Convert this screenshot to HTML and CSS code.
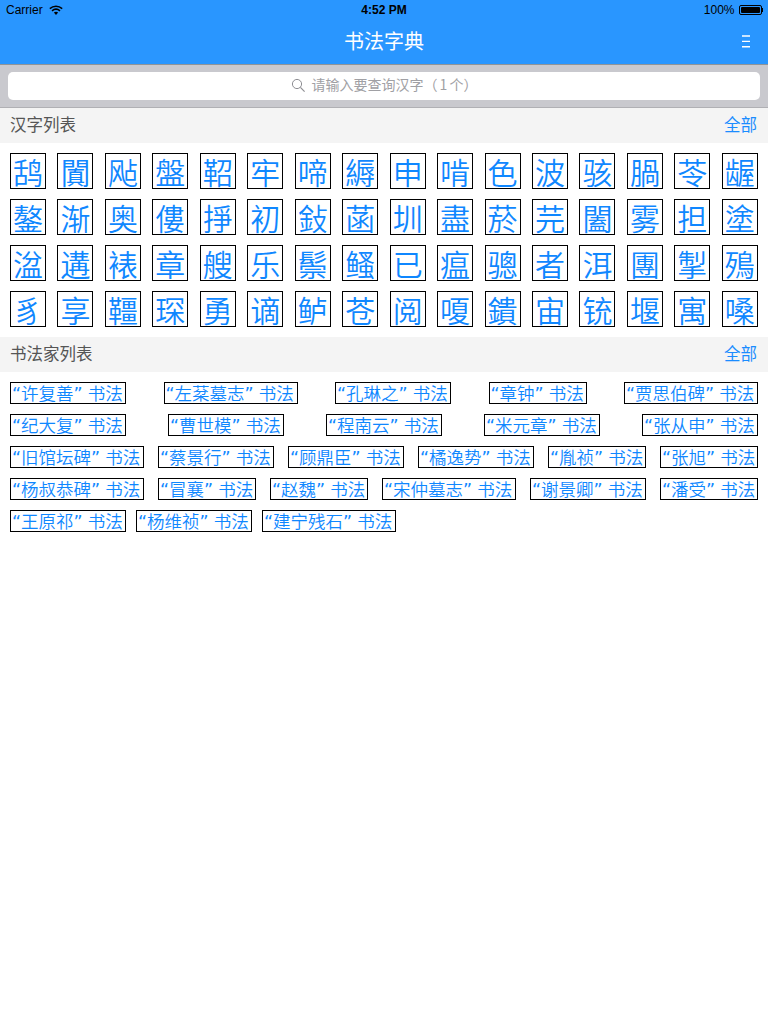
FILE: index.html
```html
<!DOCTYPE html>
<html lang="zh-CN">
<head>
<meta charset="utf-8">
<title>书法字典</title>
<link rel="stylesheet" href="styles.css">
</head>
<body>
<header class="nav">
  <div class="status">
    <div class="status-left"><span>Carrier</span>
      <svg class="wifi" width="14" height="10" viewBox="0 0 14 10"><path d="M.8 3.6C4.4.4 9.6.4 13.2 3.6" fill="none" stroke="#000" stroke-width="1.5"/><path d="M3 5.8c2.4-2 5.6-2 8 0" fill="none" stroke="#000" stroke-width="1.5"/><path d="M7 10 4.9 7.6c1.2-1 3-1 4.2 0z" fill="#000"/></svg>
    </div>
    <div class="status-time">4:52 PM</div>
    <div class="status-right"><span>100%</span>
      <span class="battery"><span class="battery-fill"></span></span><span class="battery-tip"></span>
    </div>
  </div>
  <div class="nav-bar">
    <h1 class="nav-title">书法字典</h1>
    <svg class="menu" width="8" height="13" viewBox="0 0 8 13"><path d="M0 1H8M0 6.4H8M0 11.8H8" stroke="#fff" stroke-width="1.4" fill="none"/></svg>
  </div>
</header>
<div class="search-wrap">
  <div class="search">
    <svg width="15" height="15" viewBox="0 0 15 15"><circle cx="6" cy="6" r="4.6" fill="none" stroke="#8e8e93" stroke-width="1"/><path d="M9.4 9.4 13.6 13.6" stroke="#8e8e93" stroke-width="1.2"/></svg>
    <span>请输入要查询汉字（<i class="count">1</i>个）</span>
  </div>
</div>
<section>
  <div class="sec-head"><span>汉字列表</span><a>全部</a></div>
  <div class="chars">
    <div class="char-row"><b>鸹</b><b>闐</b><b>飐</b><b>盤</b><b>鞀</b><b>牢</b><b>啼</b><b>縟</b><b>申</b><b>啃</b><b>色</b><b>波</b><b>骇</b><b>腡</b><b>苓</b><b>龌</b></div>
    <div class="char-row"><b>鏊</b><b>渐</b><b>奥</b><b>僂</b><b>掙</b><b>初</b><b>鈙</b><b>菡</b><b>圳</b><b>盡</b><b>菸</b><b>芫</b><b>闔</b><b>雾</b><b>担</b><b>塗</b></div>
    <div class="char-row"><b>湓</b><b>遘</b><b>裱</b><b>章</b><b>艘</b><b>乐</b><b>鬃</b><b>鳋</b><b>已</b><b>瘟</b><b>骢</b><b>者</b><b>洱</b><b>團</b><b>掣</b><b>殦</b></div>
    <div class="char-row"><b>豸</b><b>享</b><b>韁</b><b>琛</b><b>勇</b><b>谪</b><b>鲈</b><b>苍</b><b>阅</b><b>嗄</b><b>鐀</b><b>宙</b><b>铳</b><b>堰</b><b>寓</b><b>嗓</b></div>
  </div>
</section>
<section>
  <div class="sec-head"><span>书法家列表</span><a>全部</a></div>
  <div class="tags">
    <div class="tag-row"><b class="w3"><q>许复善</q>书法</b><b class="w4"><q>左棻墓志</q>书法</b><b class="w3"><q>孔琳之</q>书法</b><b class="w2"><q>章钟</q>书法</b><b class="w4"><q>贾思伯碑</q>书法</b></div>
    <div class="tag-row"><b class="w3"><q>纪大复</q>书法</b><b class="w3"><q>曹世模</q>书法</b><b class="w3"><q>程南云</q>书法</b><b class="w3"><q>米元章</q>书法</b><b class="w3"><q>张从申</q>书法</b></div>
    <div class="tag-row"><b class="w4"><q>旧馆坛碑</q>书法</b><b class="w3"><q>蔡景行</q>书法</b><b class="w3"><q>顾鼎臣</q>书法</b><b class="w3"><q>橘逸势</q>书法</b><b class="w2"><q>胤祯</q>书法</b><b class="w2"><q>张旭</q>书法</b></div>
    <div class="tag-row"><b class="w4"><q>杨叔恭碑</q>书法</b><b class="w2"><q>冒襄</q>书法</b><b class="w2"><q>赵魏</q>书法</b><b class="w4"><q>宋仲墓志</q>书法</b><b class="w3"><q>谢景卿</q>书法</b><b class="w2"><q>潘受</q>书法</b></div>
    <div class="tag-row last"><b class="w3"><q>王原祁</q>书法</b><b class="w3"><q>杨维祯</q>书法</b><b class="w4"><q>建宁残石</q>书法</b></div>
  </div>
</section>
</body>
</html>
```
FILE: styles.css
```css
* { box-sizing: border-box; }
html, body { margin: 0; padding: 0; background: #fff; }
body { font-family: "Noto Sans CJK SC", sans-serif; width: 768px; height: 1024px; overflow: hidden; }

.nav { height: 65px; background: #2996ff; border-bottom: 1px solid #8f9498; display: flex; flex-direction: column; }
.status { height: 20px; display: flex; justify-content: space-between; align-items: center; padding: 0 5px 0 6px; font: 12px/20px "Liberation Sans", sans-serif; color: #000; position: relative; }
.status-left { display: flex; align-items: center; gap: 6px; }
.status-time { font-weight: bold; position: absolute; left: 0; right: 0; text-align: center; }
.status-right { display: flex; align-items: center; }
.battery { width: 23px; height: 10px; border: 1px solid #000; border-radius: 2px; padding: 1px; margin-left: 4px; display: block; }
.battery-fill { display: block; height: 100%; background: #000; border-radius: 1px; }
.battery-tip { width: 1.5px; height: 4px; background: #000; }
.nav-bar { flex: 1; display: flex; align-items: center; justify-content: center; position: relative; padding-bottom: 2px; }
.nav-title { margin: 0; font-size: 20px; font-weight: 400; line-height: 24px; color: #fff; }
.menu { position: absolute; right: 18px; top: 15px; }

.search-wrap { height: 43px; background: #c9c9ce; border-bottom: 1px solid #b0b0b4; padding: 7px 8px; }
.search { height: 28px; background: #fff; border-radius: 5px; display: flex; align-items: center; justify-content: center; gap: 6px; padding-bottom: 2px; font-size: 14px; color: #a0a0a4; }
.search span { padding-bottom: 2px; }
.count { font-style: normal; padding: 0 2px; }

.sec-head { height: 35px; background: #f4f4f4; display: flex; justify-content: space-between; align-items: center; padding: 0 11px 4px 10px; color: #555; font-size: 16.5px; line-height: 24px; }
.sec-head a { color: #1a8cff; }

.chars { padding: 10px; height: 194px; display: flex; flex-direction: column; gap: 10px; }
.char-row { display: flex; justify-content: space-between; }
.char-row b { width: 36px; height: 36px; border: 1px solid #000; display: flex; align-items: center; justify-content: center; font-weight: 350; font-size: 30px; line-height: 34px; color: #0f87ff; }

.tags { padding: 10px; display: flex; flex-direction: column; gap: 10px; }
.tag-row { display: flex; justify-content: space-between; }
.tag-row.last { justify-content: flex-start; gap: 10px; }
.tag-row b { height: 22px; border: 1px solid #000; padding-left: 1px; display: block; white-space: pre; font-weight: 350; font-size: 17.5px; line-height: 19px; color: #0f87ff; }
.tag-row q { quotes: none; margin-right: 5px; }
.tag-row q::before { content: "“"; font-family: "DejaVu Sans", sans-serif; font-weight: 400; }
.tag-row q::after { content: "”"; font-family: "DejaVu Sans", sans-serif; font-weight: 400; }
.tag-row .w2 { width: 98px; }
.tag-row .w3 { width: 116px; }
.tag-row .w4 { width: 134px; }
```
